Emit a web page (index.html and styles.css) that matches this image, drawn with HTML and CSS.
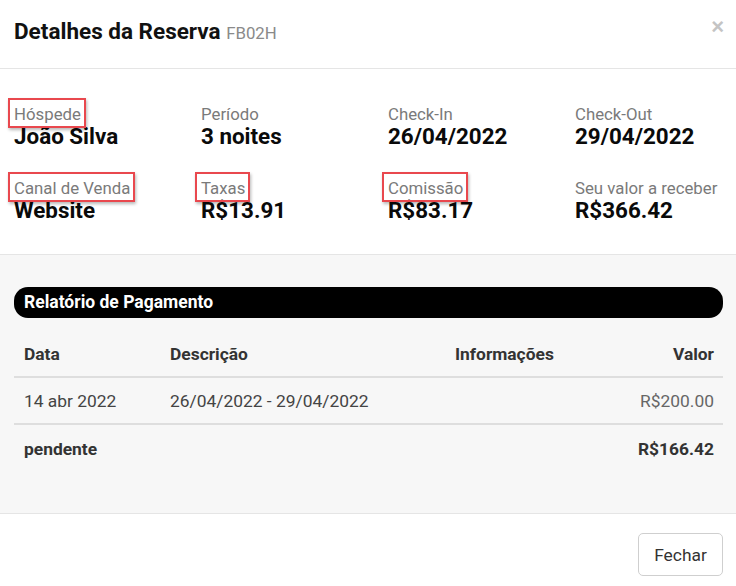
FILE: index.html
```html
<!DOCTYPE html>
<html lang="pt">
<head>
<meta charset="utf-8">
<title>Detalhes da Reserva</title>
<link rel="stylesheet" href="styles.css">
</head>
<body>
<div class="modal">
  <header class="modal-header">
    <h1 class="title">Detalhes da Reserva <span class="code">FB02H</span></h1>
    <button class="close" type="button" aria-label="Fechar">&times;</button>
  </header>
  <section class="info">
    <div class="item"><span class="label"><span class="hl">Hóspede</span></span><span class="value">João Silva</span></div>
    <div class="item"><span class="label">Período</span><span class="value">3 noites</span></div>
    <div class="item"><span class="label">Check-In</span><span class="value">26/04/2022</span></div>
    <div class="item"><span class="label">Check-Out</span><span class="value">29/04/2022</span></div>
    <div class="item"><span class="label"><span class="hl">Canal de Venda</span></span><span class="value">Website</span></div>
    <div class="item"><span class="label"><span class="hl">Taxas</span></span><span class="value">R$13.91</span></div>
    <div class="item"><span class="label"><span class="hl">Comissão</span></span><span class="value">R$83.17</span></div>
    <div class="item"><span class="label">Seu valor a receber</span><span class="value">R$366.42</span></div>
  </section>
  <section class="payments">
    <div class="bar">Relatório de Pagamento</div>
    <table class="table">
      <colgroup><col class="c1"><col class="c2"><col class="c3"><col class="c4"></colgroup>
      <thead>
        <tr><th>Data</th><th>Descrição</th><th>Informações</th><th class="right">Valor</th></tr>
      </thead>
      <tbody>
        <tr class="row"><td>14 abr 2022</td><td>26/04/2022 - 29/04/2022</td><td></td><td class="right amount">R$200.00</td></tr>
        <tr class="total"><td>pendente</td><td></td><td></td><td class="right">R$166.42</td></tr>
      </tbody>
    </table>
  </section>
  <footer class="modal-footer">
    <button class="btn" type="button">Fechar</button>
  </footer>
</div>
</body>
</html>
```
FILE: styles.css
```css
* { box-sizing: border-box; }
html, body { margin: 0; padding: 0; background: #fff; }
body { font-family: Roboto, "Liberation Sans", Arial, sans-serif; color: #111; }

.modal { width: 736px; height: 586px; background: #fff; overflow: hidden; }

.modal-header {
  height: 69px;
  display: flex;
  align-items: flex-start;
  padding: 16px 14px 0 14px;
  border-bottom: 1px solid #e5e5e5;
}
.title {
  margin: 0;
  font-size: 22.5px;
  font-weight: 700;
  line-height: 30px;
  color: #111;
  flex: 1;
}
.code { font-size: 16.8px; font-weight: 400; color: #8a8a8a; }
.close {
  border: 0; background: none; padding: 0;
  font-family: "Liberation Sans", Arial, sans-serif;
  font-size: 22px; font-weight: 700; line-height: 22px;
  color: #c4c4c4; margin-top: 0; margin-right: -2px;
}

.info {
  display: grid;
  grid-template-columns: repeat(4, 187px);
  row-gap: 30px;
  padding: 36px 14px 31px 14px;
}
.item { display: flex; flex-direction: column; }
.label { font-size: 16.8px; line-height: 18px; color: #7a7a7a; white-space: nowrap; }
.value { font-size: 22.4px; line-height: 26px; font-weight: 700; color: #0a0a0a; white-space: nowrap; }
.hl { position: relative; display: inline-block; }
.hl::after {
  content: "";
  position: absolute;
  top: -7px; bottom: -5px; left: -6px; right: -5px;
  border: 2px solid #e9484e;
  box-shadow: 1px 2px 3px rgba(0,0,0,0.28);
  pointer-events: none;
}

.payments {
  background: #f7f7f7;
  border-top: 1px solid #e5e5e5;
  border-bottom: 1px solid #e5e5e5;
  height: 260px;
  padding: 32px 13px 0 14px;
}
.bar {
  background: #000;
  color: #fff;
  height: 31px;
  line-height: 31px;
  border-radius: 14px;
  padding-left: 10px;
  font-size: 17.5px;
  font-weight: 700;
}
.table { width: 100%; border-collapse: collapse; margin-top: 14px; font-size: 17.4px; }
.c1 { width: 146px; } .c2 { width: 285px; } .c3 { width: 118px; }
.table th {
  text-align: left; font-weight: 700; color: #333;
  padding: 10px 9px 10px 10px; line-height: 24px;
  border-bottom: 2px solid #dedede;
}
.table td { padding: 12px 9px 11px 10px; line-height: 22px; color: #444; }
.table .row td { border-bottom: 2px solid #dedede; }
.table .right { text-align: right; }
.table .amount { color: #666; }
.table .total td { font-weight: 700; color: #333; padding-top: 13px; }

.modal-footer { display: flex; justify-content: flex-end; padding: 19px 13px 0 0; }
.btn {
  width: 85px; height: 43px;
  background: #fff; border: 1px solid #cfcfcf; border-radius: 5px;
  font-family: Roboto, "Liberation Sans", Arial, sans-serif;
  font-size: 17.4px; color: #333;
}
```
